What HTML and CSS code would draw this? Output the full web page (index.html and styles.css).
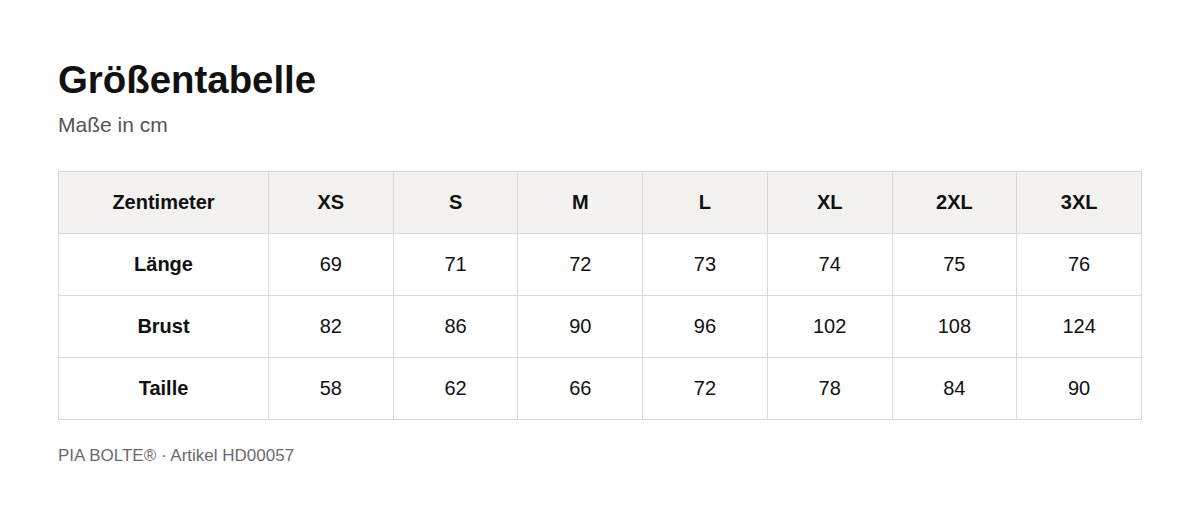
FILE: index.html
```html
<!DOCTYPE html>
<html lang="de">
<head>
<meta charset="utf-8">
<title>Größentabelle</title>
<link rel="stylesheet" href="styles.css">
</head>
<body>
<main class="page">
  <h1 class="title">Größentabelle</h1>
  <p class="subtitle">Maße in cm</p>
  <table class="sizes">
    <colgroup>
      <col class="col-label">
      <col><col><col><col><col><col><col>
    </colgroup>
    <thead>
      <tr>
        <th>Zentimeter</th><th>XS</th><th>S</th><th>M</th><th>L</th><th>XL</th><th>2XL</th><th>3XL</th>
      </tr>
    </thead>
    <tbody>
      <tr><th>Länge</th><td>69</td><td>71</td><td>72</td><td>73</td><td>74</td><td>75</td><td>76</td></tr>
      <tr><th>Brust</th><td>82</td><td>86</td><td>90</td><td>96</td><td>102</td><td>108</td><td>124</td></tr>
      <tr><th>Taille</th><td>58</td><td>62</td><td>66</td><td>72</td><td>78</td><td>84</td><td>90</td></tr>
    </tbody>
  </table>
  <p class="footer">PIA BOLTE® · Artikel HD00057</p>
</main>
</body>
</html>
```
FILE: styles.css
```css
html, body {
  margin: 0;
  padding: 0;
  background: #ffffff;
}
body {
  font-family: "Liberation Sans", Arial, sans-serif;
  color: #111111;
}
.page {
  padding: 58px 58px 0 58px;
}
.title {
  margin: 0;
  font-size: 38.4px;
  line-height: 44px;
  font-weight: 700;
  color: #111111;
}
.subtitle {
  margin: 10px 0 0 0;
  font-size: 21px;
  line-height: 25px;
  color: #555555;
}
.sizes {
  margin-top: 34px;
  width: 100%;
  border-collapse: collapse;
  table-layout: fixed;
}
.col-label {
  width: 210px;
}
.sizes th,
.sizes td {
  border: 1px solid #d9d9d9;
  padding: 19px 8px;
  font-size: 20px;
  line-height: 23px;
  text-align: center;
  color: #111111;
}
.sizes th {
  font-weight: 700;
}
.sizes td {
  font-weight: 400;
}
.sizes thead th {
  background: #f3f2ef;
}
.footer {
  margin: 26px 0 0 0;
  font-size: 17px;
  line-height: 20px;
  color: #6b6b6b;
}
```
